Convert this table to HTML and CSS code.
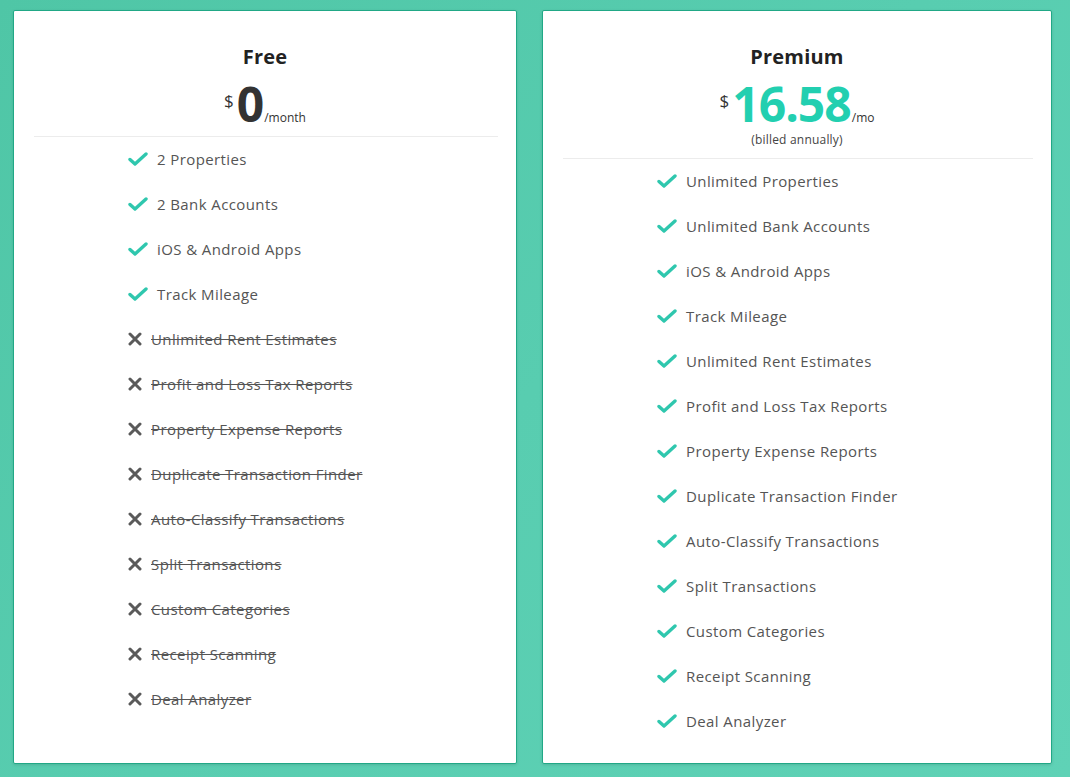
FILE: index.html
```html
<!DOCTYPE html>
<html>
<head>
<meta charset="utf-8">
<link rel="stylesheet" href="styles.css">
</head>
<body>
<div class="page">
  <section class="card card-free">
    <header class="head">
      <h2 class="title">Free</h2>
      <div class="price">
        <span class="cur">$</span><span class="amount">0</span><span class="per">/month</span>
      </div>
    </header>
    <hr class="divider">
    <ul class="features">
      <li class="yes"><svg class="ic" viewBox="0 0 20 14"><path d="M2 7.5 L7 12 L18 2"/></svg><span>2 Properties</span></li>
      <li class="yes"><svg class="ic" viewBox="0 0 20 14"><path d="M2 7.5 L7 12 L18 2"/></svg><span>2 Bank Accounts</span></li>
      <li class="yes"><svg class="ic" viewBox="0 0 20 14"><path d="M2 7.5 L7 12 L18 2"/></svg><span>iOS &amp; Android Apps</span></li>
      <li class="yes"><svg class="ic" viewBox="0 0 20 14"><path d="M2 7.5 L7 12 L18 2"/></svg><span>Track Mileage</span></li>
      <li class="no"><svg class="ix" viewBox="0 0 14 14"><path d="M2 2 L12 12 M12 2 L2 12"/></svg><span>Unlimited Rent Estimates</span></li>
      <li class="no"><svg class="ix" viewBox="0 0 14 14"><path d="M2 2 L12 12 M12 2 L2 12"/></svg><span>Profit and Loss Tax Reports</span></li>
      <li class="no"><svg class="ix" viewBox="0 0 14 14"><path d="M2 2 L12 12 M12 2 L2 12"/></svg><span>Property Expense Reports</span></li>
      <li class="no"><svg class="ix" viewBox="0 0 14 14"><path d="M2 2 L12 12 M12 2 L2 12"/></svg><span>Duplicate Transaction Finder</span></li>
      <li class="no"><svg class="ix" viewBox="0 0 14 14"><path d="M2 2 L12 12 M12 2 L2 12"/></svg><span>Auto-Classify Transactions</span></li>
      <li class="no"><svg class="ix" viewBox="0 0 14 14"><path d="M2 2 L12 12 M12 2 L2 12"/></svg><span>Split Transactions</span></li>
      <li class="no"><svg class="ix" viewBox="0 0 14 14"><path d="M2 2 L12 12 M12 2 L2 12"/></svg><span>Custom Categories</span></li>
      <li class="no"><svg class="ix" viewBox="0 0 14 14"><path d="M2 2 L12 12 M12 2 L2 12"/></svg><span>Receipt Scanning</span></li>
      <li class="no"><svg class="ix" viewBox="0 0 14 14"><path d="M2 2 L12 12 M12 2 L2 12"/></svg><span>Deal Analyzer</span></li>
    </ul>
  </section>
  <section class="card card-premium">
    <header class="head">
      <h2 class="title">Premium</h2>
      <div class="price">
        <span class="cur">$</span><span class="amount teal">16.58</span><span class="per">/mo</span>
      </div>
      <div class="billed">(billed annually)</div>
    </header>
    <hr class="divider">
    <ul class="features">
      <li class="yes"><svg class="ic" viewBox="0 0 20 14"><path d="M2 7.5 L7 12 L18 2"/></svg><span>Unlimited Properties</span></li>
      <li class="yes"><svg class="ic" viewBox="0 0 20 14"><path d="M2 7.5 L7 12 L18 2"/></svg><span>Unlimited Bank Accounts</span></li>
      <li class="yes"><svg class="ic" viewBox="0 0 20 14"><path d="M2 7.5 L7 12 L18 2"/></svg><span>iOS &amp; Android Apps</span></li>
      <li class="yes"><svg class="ic" viewBox="0 0 20 14"><path d="M2 7.5 L7 12 L18 2"/></svg><span>Track Mileage</span></li>
      <li class="yes"><svg class="ic" viewBox="0 0 20 14"><path d="M2 7.5 L7 12 L18 2"/></svg><span>Unlimited Rent Estimates</span></li>
      <li class="yes"><svg class="ic" viewBox="0 0 20 14"><path d="M2 7.5 L7 12 L18 2"/></svg><span>Profit and Loss Tax Reports</span></li>
      <li class="yes"><svg class="ic" viewBox="0 0 20 14"><path d="M2 7.5 L7 12 L18 2"/></svg><span>Property Expense Reports</span></li>
      <li class="yes"><svg class="ic" viewBox="0 0 20 14"><path d="M2 7.5 L7 12 L18 2"/></svg><span>Duplicate Transaction Finder</span></li>
      <li class="yes"><svg class="ic" viewBox="0 0 20 14"><path d="M2 7.5 L7 12 L18 2"/></svg><span>Auto-Classify Transactions</span></li>
      <li class="yes"><svg class="ic" viewBox="0 0 20 14"><path d="M2 7.5 L7 12 L18 2"/></svg><span>Split Transactions</span></li>
      <li class="yes"><svg class="ic" viewBox="0 0 20 14"><path d="M2 7.5 L7 12 L18 2"/></svg><span>Custom Categories</span></li>
      <li class="yes"><svg class="ic" viewBox="0 0 20 14"><path d="M2 7.5 L7 12 L18 2"/></svg><span>Receipt Scanning</span></li>
      <li class="yes"><svg class="ic" viewBox="0 0 20 14"><path d="M2 7.5 L7 12 L18 2"/></svg><span>Deal Analyzer</span></li>
    </ul>
  </section>
</div>
</body>
</html>
```
FILE: styles.css
```css
* { box-sizing: border-box; }
html, body { margin: 0; padding: 0; }
body {
  width: 1070px;
  height: 777px;
  overflow: hidden;
  background: linear-gradient(135deg, #4fc6a6 0%, #58cdb0 50%, #5fd2b6 100%);
  font-family: "Open Sans", "Liberation Sans", sans-serif;
  color: #555;
}
.page {
  display: flex;
  gap: 25px;
  padding: 10px 18px 13px 13px;
  height: 777px;
}
.card {
  background: #fff;
  border: 1px solid #21a886;
  border-radius: 2px;
  box-shadow: 0 1px 3px rgba(0,0,0,0.12);
  padding-top: 34px;
}
.card-free { width: 504px; }
.card-premium { width: 510px; }
.head {
  display: flex;
  flex-direction: column;
  align-items: center;
}
.title {
  margin: 0;
  font-size: 20px;
  line-height: 24px;
  font-weight: 700;
  color: #222;
  letter-spacing: 0.2px;
}
.price {
  display: flex;
  align-items: baseline;
  margin-top: 11px;
  height: 48px;
}
.cur {
  font-size: 17px;
  line-height: 20px;
  color: #333;
  align-self: flex-start;
  margin-top: 11px;
  margin-right: 3px;
}
.amount {
  font-size: 48px;
  line-height: 48px;
  font-weight: 700;
  color: #333;
  letter-spacing: -1px;
}
.amount.teal { color: #22cfb0; }
.per {
  font-size: 12px;
  color: #333;
  margin-left: 1px;
}
.billed {
  font-size: 12px;
  line-height: 14px;
  color: #444;
  margin-top: 5px;
  letter-spacing: 0.2px;
}
.divider {
  border: 0;
  border-top: 1px solid #ececec;
  margin: 8px 18px 0 20px;
}
.card-premium .divider { margin-top: 11px; }
.features {
  list-style: none;
  margin: -1px 0 0;
  padding: 0 0 0 114px;
}
.features li {
  display: flex;
  align-items: center;
  height: 45px;
  font-size: 15px;
  letter-spacing: 0.4px;
  color: #555;
}
.ic {
  width: 20px;
  height: 14px;
  margin-right: 9px;
  flex: none;
}
.ic path {
  fill: none;
  stroke: #2fc7ae;
  stroke-width: 3.4;
  stroke-linecap: round;
  stroke-linejoin: round;
}
.ix {
  width: 14px;
  height: 14px;
  margin-right: 9px;
  flex: none;
}
.ix path {
  fill: none;
  stroke: #5a5a5a;
  stroke-width: 3;
  stroke-linecap: round;
}
.no span { text-decoration: line-through; }
```
